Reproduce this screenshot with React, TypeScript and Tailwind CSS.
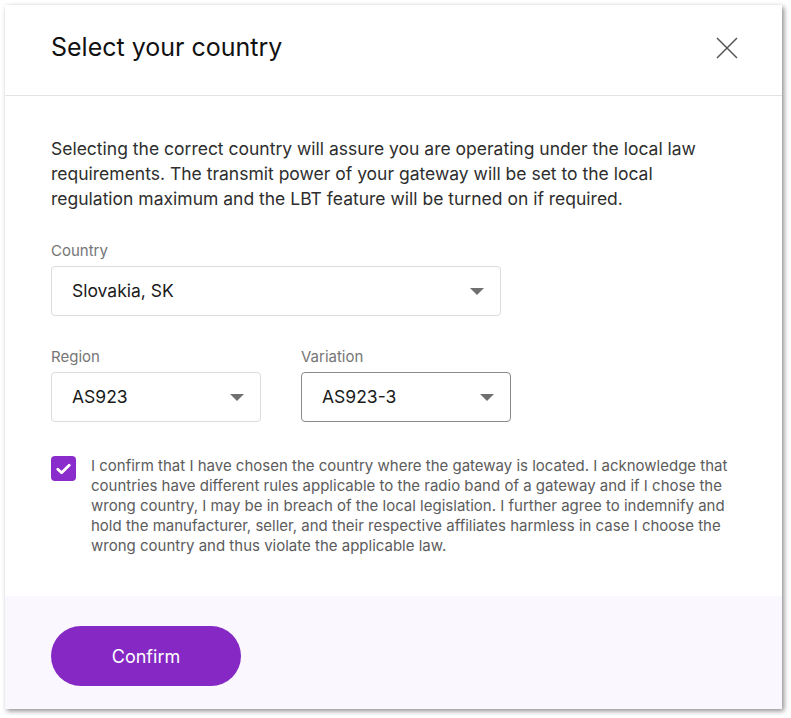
function Caret() {
  return (
    <svg width="14" height="7" viewBox="0 0 14 7" className="shrink-0">
      <path d="M0 0 L14 0 L7 7 Z" fill="#707070" />
    </svg>
  )
}

interface SelectBoxProps {
  label: string
  value: string
  width: string
  focused?: boolean
}

function SelectBox({ label, value, width, focused }: SelectBoxProps) {
  return (
    <div className={width}>
      <div className="text-[15px] leading-5 text-[#757575] mb-[5px]">{label}</div>
      <div
        className={
          "h-[50px] rounded-[4px] border flex items-center justify-between pl-5 pr-4 " +
          (focused ? "border-[#8a8a8a]" : "border-[#dcdcdc]")
        }
      >
        <span className="text-[17.5px] text-[#1a1a1a]">{value}</span>
        <Caret />
      </div>
    </div>
  )
}

export default function App() {
  return (
    <div className="w-[791px] h-[718px] bg-white p-[5px] pr-[9px] pb-[9px]" style={{ fontFamily: "Inter, 'Noto Sans', sans-serif" }}>
      <div className="w-[777px] h-[704px] bg-white flex flex-col shadow-[2px_2px_5px_rgba(0,0,0,0.45)]">
        {/* header */}
        <div className="h-[91px] shrink-0 border-b border-[#e3e3e3] flex items-center justify-between pl-[46px] pr-[44px] pb-[5px]">
          <h1 className="text-[25px] text-[#111] font-normal">Select your country</h1>
          <svg width="22" height="22" viewBox="0 0 22 22">
            <path d="M1 1 L21 21 M21 1 L1 21" stroke="#555" strokeWidth="1.5" />
          </svg>
        </div>

        {/* body */}
        <div className="flex-1 px-[46px] pt-[40px]">
          <p className="text-[17.5px] leading-[25px] text-[#2e2e2e]">
            Selecting the correct country will assure you are operating under the local law requirements. The transmit
            power of your gateway will be set to the local regulation maximum and the LBT feature will be turned on if
            required.
          </p>

          <div className="mt-[30px]">
            <SelectBox label="Country" value="Slovakia, SK" width="w-[450px]" />
          </div>

          <div className="mt-[31px] flex gap-[40px]">
            <SelectBox label="Region" value="AS923" width="w-[210px]" />
            <SelectBox label="Variation" value="AS923-3" width="w-[210px]" focused />
          </div>

          <div className="mt-[34px] flex gap-[15px]">
            <div className="w-[25px] h-[25px] shrink-0 rounded-[4px] bg-[#8a2ccb] flex items-center justify-center">
              <svg width="15" height="12" viewBox="0 0 15 12">
                <path d="M1.8 6.3 L5.6 9.8 L13.2 2.2" fill="none" stroke="white" strokeWidth="2.8" strokeLinecap="round" strokeLinejoin="round" />
              </svg>
            </div>
            <p className="text-[15px] leading-[20px] text-[#5c5c5c]">
              I confirm that I have chosen the country where the gateway is located. I acknowledge that countries have
              different rules applicable to the radio band of a gateway and if I chose the wrong country, I may be in
              breach of the local legislation. I further agree to indemnify and hold the manufacturer, seller, and their
              respective affiliates harmless in case I choose the wrong country and thus violate the applicable law.
            </p>
          </div>
        </div>

        {/* footer */}
        <div className="h-[113px] shrink-0 bg-[#faf7fe] px-[46px] pt-[30px]">
          <button className="w-[190px] h-[60px] rounded-full bg-[#8629c4] text-white text-[18px]">Confirm</button>
        </div>
      </div>
    </div>
  )
}
